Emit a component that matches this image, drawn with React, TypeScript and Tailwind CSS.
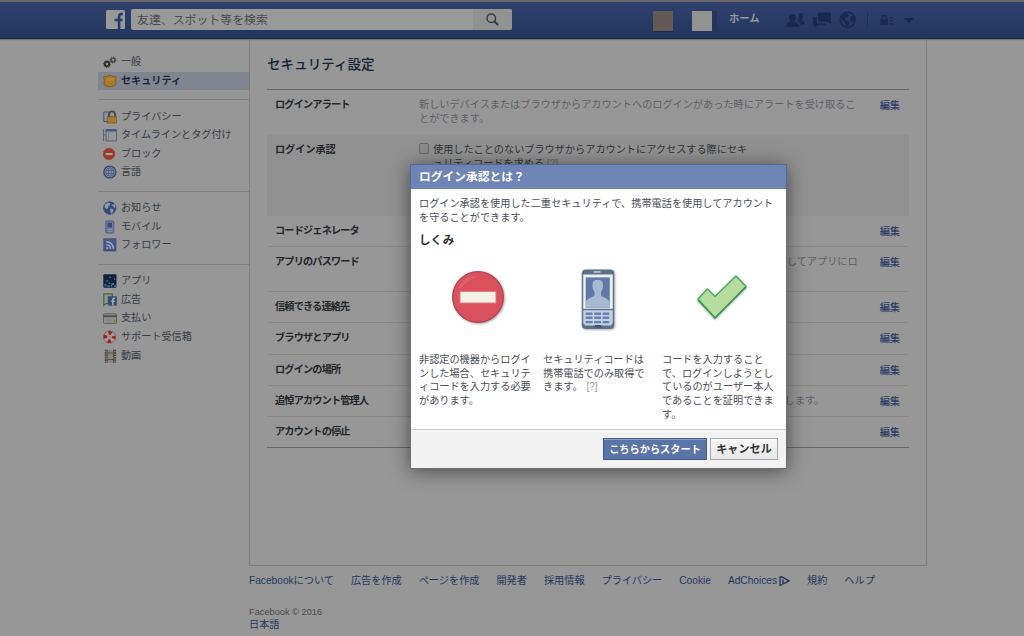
import React from 'react';

const FONT = "font-['Liberation_Sans','Noto_Sans_CJK_JP',sans-serif]";

type IconName =
  | 'gears' | 'badge' | 'lock' | 'timeline' | 'block' | 'language'
  | 'globe' | 'mobile' | 'rss' | 'apps' | 'ads' | 'card' | 'support' | 'film';

const icons: Record<IconName, React.ReactNode> = {
  gears: (
    <g fill="none" stroke="#333">
      <circle cx="4" cy="9" r="2.2" strokeWidth="2" />
      <circle cx="4" cy="9" r="3.3" strokeWidth="1" strokeDasharray="1.2 1.3" />
      <circle cx="10" cy="5" r="2" strokeWidth="1.700" stroke="#484848" />
      <circle cx="10" cy="5" r="3" strokeWidth="1" strokeDasharray="1.1 1.2" stroke="#484848" />
    </g>
  ),
  badge: (
    <g>
      <path d="M1.500 2 3.500 2.600 7 1.200l3.500 1.400 2-.6.8 2.200-.8 2 .5 4-1.500 1.800-2 .2-2.500 1-2.500-1-2-.2L1 10l.5-4-.8-2z" fill="#a97a28" stroke="#7d571a" strokeWidth=".8" />
      <path d="M4 5.500h6" stroke="#b88c3c" strokeWidth="2" />
    </g>
  ),
  lock: (
    <g>
      <path d="M.8 2h6v9.500h-6z" fill="#8f959f" stroke="#405277" />
      <path d="M5.800 7V4.500a3 3 0 0 1 6.200 0V7" fill="none" stroke="#46484b" strokeWidth="1.800" />
      <path d="M4.300 6.700h9.200v6.300H4.300z" fill="#a67830" stroke="#6d5120" strokeWidth=".7" />
    </g>
  ),
  timeline: (
    <g>
      <path d="M.6 1v12M.6 7h2" stroke="#4f5f80" fill="none" />
      <path d="M3 1.500h10.500v11.500H3z" fill="#949698" stroke="#565d6a" strokeWidth=".9" />
      <path d="M3 1.200h10.500v2.300H3z" fill="#435787" />
      <path d="M5.500 4v9" stroke="#73777d" strokeWidth=".7" />
    </g>
  ),
  block: (
    <g>
      <circle cx="6" cy="7" r="5.800" fill="#9c3a2d" stroke="#85332b" strokeWidth=".5" />
      <path d="M2.700 6h6.800v2.100H2.700z" fill="#a9a19e" />
    </g>
  ),
  language: (
    <g fill="none">
      <circle cx="6.800" cy="7" r="5.900" stroke="#33476f" strokeWidth="1.400" fill="#8a94a5" />
      <ellipse cx="6.800" cy="7" rx="3.900" ry="4.100" stroke="#43557f" strokeWidth=".9" />
      <path d="M5.500 3v8M8.200 3v8M2.800 5.500h8M2.800 8.500h8" stroke="#43557f" strokeWidth=".8" />
    </g>
  ),
  globe: (
    <g>
      <circle cx="6.800" cy="7" r="6.200" fill="#344a78" stroke="#2d3e66" strokeWidth=".7" />
      <path d="M2 3.500 5 1.500l2.500 1-1 2.200-1.500.8.3 1.500L3.500 8 1.500 6zM8.500 4l3-1 1.300 3-1 1-1.500-1.500zM7 7.500l3 .5.500 2L8.500 13 7.500 11z" fill="#8f9bac" />
    </g>
  ),
  mobile: (
    <g>
      <rect x="2.800" y=".8" width="8" height="12.400" rx="1" fill="#6a7a9a" stroke="#52607d" strokeWidth=".9" />
      <path d="M4.600 2.800h4.400v4.600H4.600z" fill="#344a78" />
      <path d="M4.600 9.500h4.400M4.600 11.300h4.400" stroke="#8995ab" strokeWidth=".9" />
    </g>
  ),
  rss: (
    <g>
      <rect x=".8" y=".8" width="12.200" height="12.200" fill="#46588a" stroke="#38476c" strokeWidth=".7" />
      <circle cx="4.300" cy="10" r="1.100" fill="#a1a8b8" />
      <path d="M3.300 6.600a4 4 0 0 1 4.200 4.300M3.300 3.800a6.800 6.800 0 0 1 7.100 7.100" stroke="#a1a8b8" strokeWidth="1.400" fill="none" />
    </g>
  ),
  apps: (
    <g>
      <rect x=".3" y=".3" width="13.200" height="13.400" rx="1" fill="#10233f" />
      <path d="M1.500 10h2v2.500h-2zM4.500 11.300h2.300v1.700H4.500zM8.500 9h2.500v2H8.500zM11.200 11.200h1.800v1.800h-1.800zM5.500 8.500h1.500v1.500H5.500z" fill="#437498" />
      <path d="M6.500 2.800h1.200V4H6.500zM3.500 6.300h1.300v1.300H3.500zM11 4.500h1.200v1.200H11zM8 11.300h1.200v1.200H8z" fill="#6b92aa" />
    </g>
  ),
  ads: (
    <g>
      <path d="M.8.800h8.500v9.500H3.500L.8 12.500z" fill="#8f9a89" stroke="#3f6735" strokeWidth="1.200" />
      <path d="M4.800 3.300h9v9.200H8.800l-1.500 1.300v-1.300H4.800z" fill="#364b7c" />
      <path d="M12 5.300h-.8c-1 0-1.400.5-1.400 1.400v5.500M8.200 8.200h3.500" stroke="#a9afbd" strokeWidth="1.400" fill="none" />
    </g>
  ),
  card: (
    <g>
      <rect x=".5" y="2.800" width="13" height="9.600" rx=".8" fill="#91918e" stroke="#5a5a5a" strokeWidth=".9" />
      <path d="M.5 4.300h13v1.900H.5z" fill="#4c4c4c" />
      <path d="M2.500 9h6.500" stroke="#6d7480" strokeWidth=".9" strokeDasharray="1.500 .5" />
      <path d="M10.700 8.700h1.800v2.200h-1.800z" fill="#99702c" />
    </g>
  ),
  support: (
    <g fill="none">
      <circle cx="6.500" cy="7" r="4.200" stroke="#a19d9b" strokeWidth="3.600" />
      <circle cx="6.500" cy="7" r="4.200" stroke="#a01d18" strokeWidth="3.600" strokeDasharray="3.300 3.300" strokeDashoffset="1.650" />
      <circle cx="6.500" cy="7" r="6.100" stroke="#694f4c" strokeWidth=".6" />
    </g>
  ),
  film: (
    <g>
      <path d="M1.500.700h11.800v13H1.500z" fill="#8a847d" />
      <path d="M2.700.700v13M12.100.700v13" stroke="#4a4541" strokeWidth="1.700" strokeDasharray="1.600 .8" />
      <path d="M4.300.700v13M10.500.700v13M4.300 4h6.200M4.300 10.500h6.200" stroke="#4f4a46" strokeWidth=".9" />
    </g>
  ),
};

const menu: { label: string; icon: IconName; active?: boolean }[][] = [
  [
    { label: '一般', icon: 'gears' },
    { label: 'セキュリティ', icon: 'badge', active: true },
  ],
  [
    { label: 'プライバシー', icon: 'lock' },
    { label: 'タイムラインとタグ付け', icon: 'timeline' },
    { label: 'ブロック', icon: 'block' },
    { label: '言語', icon: 'language' },
  ],
  [
    { label: 'お知らせ', icon: 'globe' },
    { label: 'モバイル', icon: 'mobile' },
    { label: 'フォロワー', icon: 'rss' },
  ],
  [
    { label: 'アプリ', icon: 'apps' },
    { label: '広告', icon: 'ads' },
    { label: '支払い', icon: 'card' },
    { label: 'サポート受信箱', icon: 'support' },
    { label: '動画', icon: 'film' },
  ],
];

const rows = [
  { label: 'コードジェネレータ', height: 'h-[31px]', lines: [] },
  { label: 'アプリのパスワード', height: 'h-[45px]', lines: ['ログイン承認を設定中の場合、 セキュリティコードの代わりにパスワードを使用してアプリにロ', 'グインできます。'] },
  { label: '信頼できる連絡先', height: 'h-[31.3px]', lines: ['アカウントへのアクセスに問題が発生した場合、助けになる友達を選択できます。'] },
  { label: 'ブラウザとアプリ', height: 'h-[31.3px]', lines: [] },
  { label: 'ログインの場所', height: 'h-[31.3px]', lines: [] },
  { label: '追悼アカウント管理人', height: 'h-[31.3px]', lines: ['万が一のことがあった場合、追悼アカウントを管理する家族や親しい友達を設定します。'] },
  { label: 'アカウントの停止', height: 'h-[31.3px]', lines: [] },
];

const Header = () => (
  <header className="h-[39px] border-t-2 border-[#686868] bg-linear-to-b from-[#2f416c] to-[#22355f] shadow-[inset_0_-1px_0_#15264d,0_1px_1px_#777]">
    <div className="flex h-9 items-center pl-[106px]">
      <svg className="-mt-px h-[19px] w-[19px]" viewBox="0 0 19 19">
        <rect width="19" height="19" rx="1.500" fill="#999" />
        <path d="M17 4h-1.400c-1.800 0-2.500.9-2.500 2.600V19M8.500 10h8" stroke="#263a68" strokeWidth="2.600" fill="none" />
      </svg>
      <div className="ml-1.5 flex h-[21px] w-[381px] items-center overflow-hidden rounded-[2px] bg-[#999] -mt-px">
        <span className="flex-1 pl-1.5 text-[11.9px] leading-[20px] text-[#484b50]">友達、スポット等を検索</span>
        <span className="flex h-full w-[39px] items-center justify-center bg-[#929292]">
          <svg className="-mt-px h-[13px] w-[13px]" viewBox="0 0 13 13" fill="none" stroke="#333b49">
            <circle cx="5.300" cy="5.300" r="4.300" strokeWidth="1.500" />
            <path d="m8.500 8.500 3.600 3.600" strokeWidth="2.100" />
          </svg>
        </span>
      </div>
      <div className="ml-[141px] mt-px h-5 w-5 bg-[#655954] shadow-[0_1px_0_#1c2b4e]" />
      <div className="ml-[19px] mt-px h-5 w-5 bg-[#929492] shadow-[5px_0_0_#263556]" />
      <span className="ml-[17px] -mt-[3px] text-[10.3px] font-bold text-[#999]">ホーム</span>
      <svg className="ml-[26px] h-[18px] w-[72px]" viewBox="0 0 72 18" fill="#18294f">
        <path d="M12.500 2.500c2.500-1.300 5 0 4.500 3-.2 1.300-.8 2.200-1.100 2.700 0 2 3.100 1.700 3.100 5.300h-4.500c-.3-2-1.800-2.800-3-3.500 1.300-2 2.200-5 1-7.500z" />
        <path d="M6.500 3c2.300 0 3.800 1.600 3.400 4.200-.2 1.400-.6 2.200-1 2.700 0 2 4 2 4.600 6H-.200c.6-4 4.400-4 4.400-6-.4-.5-.8-1.300-1-2.700C2.800 4.600 4.200 3 6.500 3z" />
        <path d="M33.500 1.500h10c.8 0 1.300.5 1.300 1.300v7l.7 3-3.500-2h-8.500c-.8 0-1.300-.5-1.300-1.300V2.800c0-.8.500-1.300 1.300-1.300z" />
        <path d="M28.500 6H31v5.500c0 .6.400 1 1 1h7.500v.5c0 .8-.5 1.300-1.300 1.300H32L28.300 17v-2.800c-.8 0-1.300-.5-1.300-1.200V7.300c0-.8.700-1.300 1.500-1.300z" />
        <circle cx="61.700" cy="8.800" r="7.500" fill="none" stroke="#18294f" strokeWidth="1.400" />
        <path d="M55.500 6 59 2.500l4 .2-1 3.200-2.500 1-.3 2.200 3.600 1.200 1 1.700-2.500 3.500-2-1-.5-3.500-3.300-2.500zM64.500 5.500l3-1 1.300 5-2.300 2-2-2.500z" />
      </svg>
      <div className="ml-[9px] h-4 w-px bg-[#1f315a]" />
      <svg className="ml-3 h-3 w-[14px]" viewBox="0 0 14 12" fill="#18294f">
        <path d="M.5 5.300h7.500V11H.5zM9.500 3H13v1.200H9.500zM9.500 6H13v1.200H9.500zM9.500 9.300H13v1.200H9.500z" />
        <path d="M2.200 6V3.500a2 2 0 0 1 4 0V6" fill="none" stroke="#18294f" strokeWidth="1.400" />
      </svg>
      <div className="ml-[10px] border-x-[5px] border-t-[5px] border-x-transparent border-t-[#18294f]" />
    </div>
  </header>
);

const Sidebar = () => (
  <aside className="w-[151px] pt-[14px]">
    {menu.map((group, i) => (
      <ul key={i} className={i > 0 ? 'mt-[9px] border-t border-[#7e7e7e] pt-[7.2px]' : ''}>
        {group.map((item) => (
          <li
            key={item.label}
            className={`flex h-[18.6px] items-center gap-[4px] pl-[5px] text-[10.15px] whitespace-nowrap ${item.active ? 'bg-[#81858f] font-bold text-[#1c2438]' : 'text-[#363a43]'}`}
          >
            <svg className="h-[14px] w-[14px] shrink-0" viewBox="0 0 14 14">{icons[item.icon]}</svg>
            <span className="leading-[18px]">{item.label}</span>
          </li>
        ))}
      </ul>
    ))}
  </aside>
);

const Edit = () => <a className="ml-auto pr-[9px] pt-px text-[#2a3c66] font-medium">編集</a>;

const Settings = () => (
  <main className="h-[527px] w-[678px] border border-t-0 border-[#7d7d7d] px-[17px] text-[10.16px] leading-[13.6px]">
    <h2 className="h-[51px] border-b border-[#686868] pt-[16px] text-[13.55px] font-medium leading-5 text-[#141e36]">セキュリティ設定</h2>
    <div className="flex h-11 pt-[8px] pl-2">
      <span className="w-36 text-[10.16px] font-bold tracking-[-0.83px] text-[#242528]">ログインアラート</span>
      <p className="whitespace-nowrap text-[#5c5f65]">
        新しいデバイスまたはブラウザからアカウントへのログインがあった時にアラートを受け取るこ<br />とができます。
      </p>
      <Edit />
    </div>
    <div className="flex h-[82px] bg-[#919191] pt-[9px] pl-2">
      <span className="w-36 font-bold tracking-[-0.05px] text-[#242528]">ログイン承認</span>
      <span className="mr-1 h-[11px] w-[10px] rounded-[2px] border border-[#666] bg-[#8c8c8c]" />
      <p className="whitespace-nowrap text-[#2f3136]">
        使用したことのないブラウザからアカウントにアクセスする際にセキ<br />ュリティコードを求める <span className="text-[10px] text-[#60646c]">[?]</span>
      </p>
    </div>
    {rows.map((row, i) => (
      <div key={row.label} className={`flex border-b pt-[8px] pl-2 ${row.height} ${i === rows.length - 1 ? 'border-[#686868]' : 'border-[#898989]'}`}>
        <span className="w-36 font-bold tracking-[-0.83px] text-[#242528]">{row.label}</span>
        <p className="whitespace-nowrap text-[#5c5f65]">
          {row.lines.map((line) => <span key={line} className="block">{line}</span>)}
        </p>
        <Edit />
      </div>
    ))}
  </main>
);

const Footer = () => (
  <footer className="ml-[249px] pt-[7px] text-[10.16px] text-[#263660]">
    <nav className="flex gap-[17px] whitespace-nowrap leading-4">
      <a>Facebookについて</a>
      <a>広告を作成</a>
      <a>ページを作成</a>
      <a>開発者</a>
      <a>採用情報</a>
      <a>プライバシー</a>
      <a>Cookie</a>
      <a className="flex items-center">
        AdChoices
        <svg className="ml-[2px] -mt-px h-[10px] w-[11px]" viewBox="0 0 11 10" fill="none" stroke="#202f57" strokeWidth="1.300">
          <path d="M3 9H1V1h2l7 4-6 3V3.500" />
        </svg>
      </a>
      <a>規約</a>
      <a>ヘルプ</a>
    </nav>
    <div className="mt-[17px] text-[9.25px] leading-[13px] text-[#484848]">Facebook © 2016</div>
    <div className="-mt-px leading-[13px]">日本語</div>
  </footer>
);

const Dialog = () => (
  <div className="absolute left-[410px] top-[164px] flex h-[305px] w-[377px] flex-col border border-[#6f6f6f] bg-white text-[10.16px] leading-[13.6px] text-[#4a4d55] shadow-[0_2px_18px_rgba(0,0,0,0.5)]">
    <h3 className="-mx-px -mt-px h-[25px] shrink-0 border border-b-0 border-[#52699f] bg-[#6d84b4] pl-2 text-[11.75px] font-bold leading-[23px] text-white">ログイン承認とは？</h3>
    <div className="flex-1 px-2 pt-2">
      <p>ログイン承認を使用した二重セキュリティで、携帯電話を使用してアカウント<br />を守ることができます。</p>
      <h4 className="mt-[9px] text-[11.6px] font-bold leading-[14px] text-[#333]">しくみ</h4>
      <div className="mt-[14px] flex">
        <div className="w-[124px]">
          <div className="flex h-[92px] justify-center pr-[7px] pt-2">
            <svg className="h-[56px] w-[56px] drop-shadow-[1px_1px_1px_rgba(0,0,0,0.35)]" viewBox="0 0 56 56">
              <circle cx="28" cy="28" r="25.300" fill="#da505c" stroke="#ac4350" strokeWidth="1.300" />
              <path d="M8 20C11 12 17 7 25 7c4 1-2 3-6 5S13 17 8 20z" fill="#e16670" opacity=".7" />
              <path d="M10 22.500h36v11.500H10z" fill="#f5f2e6" stroke="#e27b7f" />
            </svg>
          </div>
          <p>非認定の機器からログイ<br />ンした場合、セキュリテ<br />ィコードを入力する必要<br />があります。</p>
        </div>
        <div className="w-[119px]">
          <div className="flex h-[92px] justify-center pr-[10px] pt-[8px]">
            <svg className="h-[61px] w-[34px] drop-shadow-[1px_1px_1px_rgba(0,0,0,0.3)]" viewBox="0 0 34 62">
              <rect x=".5" y=".5" width="33" height="60.500" rx="4" fill="#5c708c" />
              <path d="M12.500 3h7" stroke="#dce2eb" strokeWidth="1.300" />
              <path d="M2 5.500h30v35H2z" fill="#edf1f5" />
              <path d="M4.500 8.500h24.500v31H4.500z" fill="#6079aa" />
              <path d="M16.700 11c4.500 0 5.800 3 5.300 7-.3 3-1.300 4-2 6v3c2 2 8.500 2.500 9 8v4.500H4.500V35c.5-5.500 7-6 9-8v-3c-.7-2-1.700-3-2-6-.5-4 .7-7 5.200-7z" fill="#a8bad2" />
              <path d="M2 42h30v13l-2 2.500H4L2 55z" fill="#c4d0e3" />
              <path d="M4.500 45.500h24M4.500 49.500h24M4.500 54h24" stroke="#6680b1" strokeWidth="2.400" strokeDasharray="7 1.600" />
              <path d="M13 59.500 14 57h6l1 2.500z" fill="#3f536e" />
            </svg>
          </div>
          <p>セキュリティコードは<br />携帯電話でのみ取得で<br />きます。 <span className="ml-px text-[10px] text-[#999]">[?]</span></p>
        </div>
        <div className="flex-1 whitespace-nowrap">
          <div className="h-[92px] pl-[33px] pt-[13px]">
            <svg className="h-[48px] w-[54px] drop-shadow-[0_1px_1px_rgba(0,0,0,0.3)]" viewBox="0 0 54 48">
              <path d="m3 25 9.500-10L20 22.500 41 2l10 10.500L20 44z" fill="#b8dc9e" stroke="#4da965" strokeWidth="1.600" strokeLinejoin="round" />
              <path d="M3 26 20 44 51 13" fill="none" stroke="#359951" strokeWidth="1.500" />
            </svg>
          </div>
          <p>コードを入力すること<br />で、ログインしようとし<br />ているのがユーザー本人<br />であることを証明できま<br />す。</p>
        </div>
      </div>
    </div>
    <div className="flex h-[39px] shrink-0 justify-end gap-[3px] border-t border-[#ccc] bg-[#f2f2f2] pt-2 pr-2">
      <button className="h-[22px] w-[104px] border border-[#3f5a93] bg-[#5b74a8] text-[10.2px] font-bold leading-[19px] whitespace-nowrap text-white shadow-[inset_0_1px_0_#8a9cc2]">こちらからスタート</button>
      <button className="h-[22px] w-[68px] border border-[#aaa] bg-linear-to-b from-[#f7f7f7] to-[#e7e7e7] text-[11.1px] font-bold leading-[20px] whitespace-nowrap text-[#333]">キャンセル</button>
    </div>
  </div>
);

export default function App() {
  return (
    <div className={`relative h-[636px] w-[1024px] overflow-hidden bg-[#979797] ${FONT}`}>
      <Header />
      <div className="flex pl-[98px]">
        <Sidebar />
        <Settings />
      </div>
      <Footer />
      <Dialog />
    </div>
  );
}
